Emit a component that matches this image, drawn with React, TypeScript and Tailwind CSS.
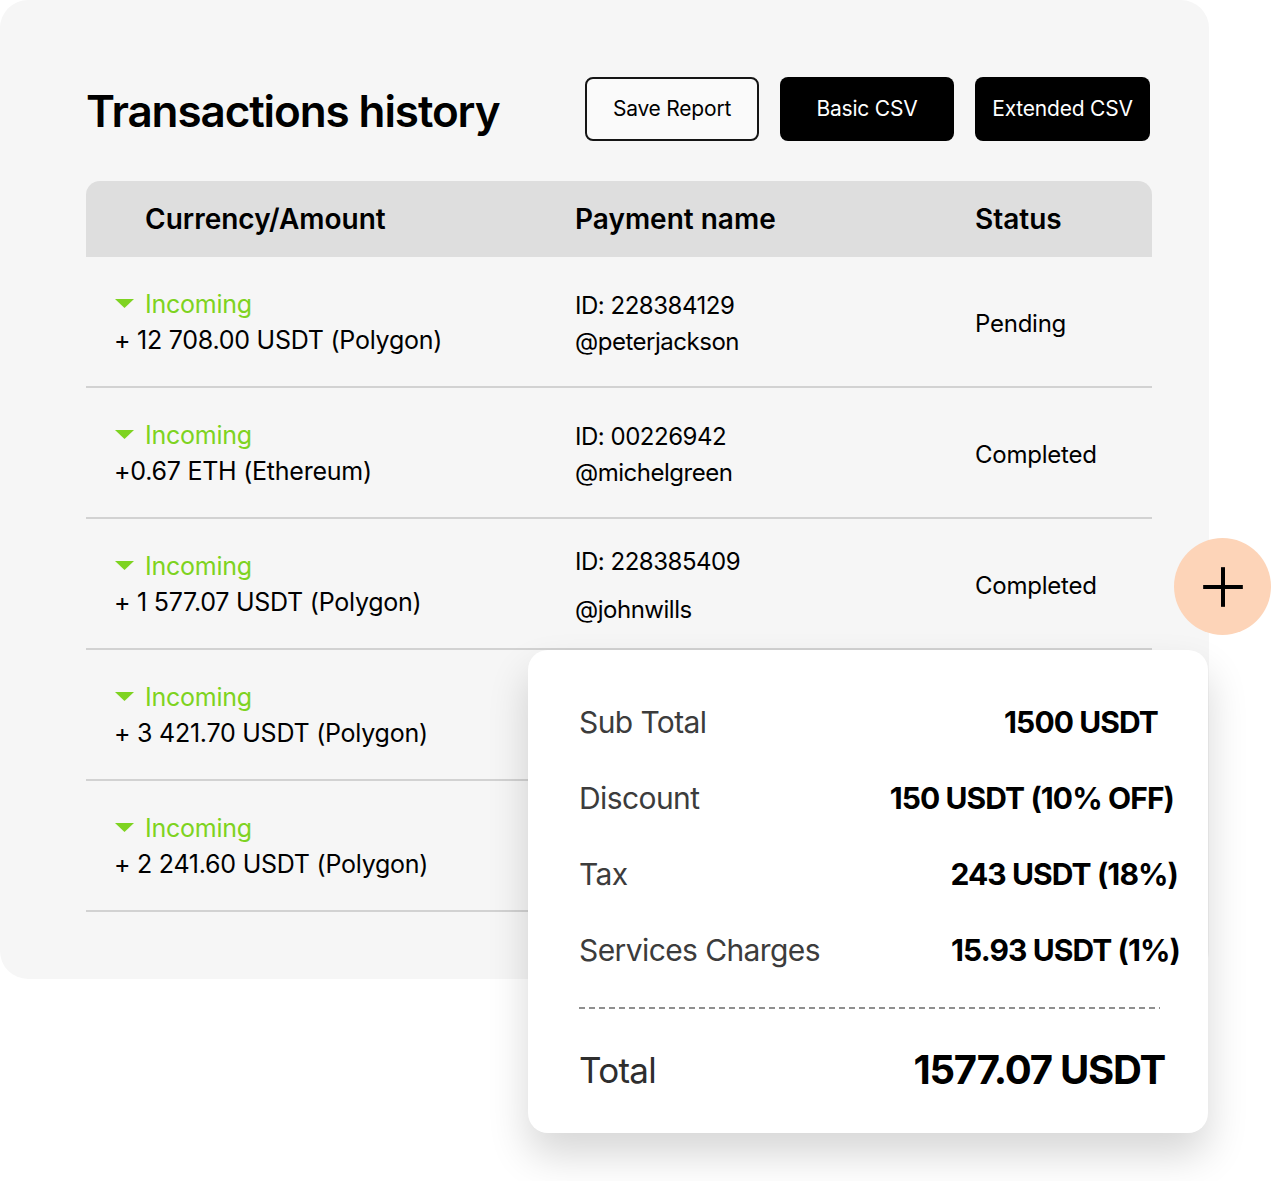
import { Plus } from 'lucide-react';

type Tx = {
  amount: string;
  id: string;
  handle: string;
  status?: string;
  wideGap?: boolean;
};

const TXS: Tx[] = [
  { amount: '+ 12 708.00 USDT (Polygon)', id: 'ID: 228384129', handle: '@peterjackson', status: 'Pending' },
  { amount: '+0.67 ETH (Ethereum)', id: 'ID: 00226942', handle: '@michelgreen', status: 'Completed' },
  { amount: '+ 1 577.07 USDT (Polygon)', id: 'ID: 228385409', handle: '@johnwills', status: 'Completed', wideGap: true },
  { amount: '+ 3 421.70 USDT (Polygon)', id: '', handle: '' },
  { amount: '+ 2 241.60 USDT (Polygon)', id: '', handle: '' },
];

const SUMMARY = [
  { label: 'Sub Total', value: '1500 USDT', pr: 'pr-[50px]' },
  { label: 'Discount', value: '150 USDT (10% OFF)', pr: 'pr-[34px]' },
  { label: 'Tax', value: '243 USDT (18%)', pr: 'pr-[30px]' },
  { label: 'Services Charges', value: '15.93 USDT (1%)', pr: 'pr-[28px]' },
];

function Triangle() {
  return (
    <svg width="19" height="9" viewBox="0 0 19 9" className="shrink-0">
      <path d="M0 0 H19 L9.5 9 Z" fill="#7ed321" />
    </svg>
  );
}

function TxRow({ tx }: { tx: Tx }) {
  return (
    <div className="grid h-[131px] grid-cols-[489px_400px_1fr] border-b-2 border-[#d2d2d2]">
      <div className="flex flex-col justify-center pl-[28px] text-[25px] leading-[36px] tracking-[-0.01em]">
        <div className="flex items-center gap-[11px] pl-[1px] text-[#7ed321]">
          <Triangle />
          <span>Incoming</span>
        </div>
        <div className="text-black">{tx.amount}</div>
      </div>
      <div
        className={`flex flex-col justify-center pt-[4px] text-[24px] tracking-[-0.02em] text-black ${
          tx.wideGap ? 'gap-[12px] leading-[36px]' : 'leading-[36px]'
        }`}
      >
        {tx.id && <div>{tx.id}</div>}
        {tx.handle && <div>{tx.handle}</div>}
      </div>
      <div className="flex items-center pt-[4px] text-[24px] tracking-[-0.01em] text-black">{tx.status}</div>
    </div>
  );
}

export default function App() {
  return (
    <div
      className="relative h-[1181px] w-[1272px] overflow-hidden bg-white"
      style={{ fontFamily: 'Inter, "Noto Sans", sans-serif' }}
    >
      <div className="h-[979px] w-[1209px] rounded-[28px] bg-[#f6f6f6] pl-[86px] pt-[77px]">
        <div className="flex h-[64px] w-[1064px] items-center justify-between">
          <h1 className="pt-[4px] text-[44px] font-semibold tracking-[-0.025em] text-black">Transactions history</h1>
          <div className="flex gap-[21px]">
            <button className="h-[64px] w-[174px] rounded-[8px] border-2 border-[#151515] bg-[#fafafa] text-[21px] tracking-[-0.01em] text-black">
              Save Report
            </button>
            <button className="h-[64px] w-[174px] rounded-[8px] bg-black text-[21px] tracking-[-0.01em] text-white">
              Basic CSV
            </button>
            <button className="h-[64px] w-[175px] rounded-[8px] bg-black text-[21px] tracking-[-0.01em] text-white">
              Extended CSV
            </button>
          </div>
        </div>

        <div className="mt-[40px] w-[1066px]">
          <div className="grid h-[76px] grid-cols-[489px_400px_1fr] items-center rounded-t-[14px] bg-[#dedede] text-[28px] font-semibold tracking-[0em] text-black">
            <div className="pl-[59px]">Currency/Amount</div>
            <div>Payment name</div>
            <div>Status</div>
          </div>
          {TXS.map((tx, i) => (
            <TxRow key={i} tx={tx} />
          ))}
        </div>
      </div>

      <button className="absolute left-[1174px] top-[538px] flex h-[97px] w-[97px] items-center justify-center rounded-full bg-[#fdd4b8]">
        <Plus size={68} strokeWidth={1.4} strokeLinecap="butt" className="text-black" />
      </button>

      <div className="absolute left-[528px] top-[650px] h-[483px] w-[680px] rounded-[20px] bg-white pl-[51px] pt-[34px] shadow-[0_22px_40px_rgba(0,0,0,0.16)]">
        {SUMMARY.map((row) => (
          <div key={row.label} className={`flex h-[76px] items-center justify-between ${row.pr}`}>
            <span className="text-[30px] tracking-[-0.02em] text-[#3c3c3c]">{row.label}</span>
            <span className="text-[30px] font-bold tracking-[-0.03em] text-black">{row.value}</span>
          </div>
        ))}
        <div className="mt-[19px] mr-[48px] h-[2px] bg-[repeating-linear-gradient(to_right,#8f8f8f_0_6px,transparent_6px_10px)]" />
        <div className="flex h-[122px] items-center justify-between pr-[43px]">
          <span className="text-[35px] tracking-[-0.02em] text-[#2e2e2e]">Total</span>
          <span className="text-[40px] font-bold tracking-[-0.03em] text-black">1577.07 USDT</span>
        </div>
      </div>
    </div>
  );
}
